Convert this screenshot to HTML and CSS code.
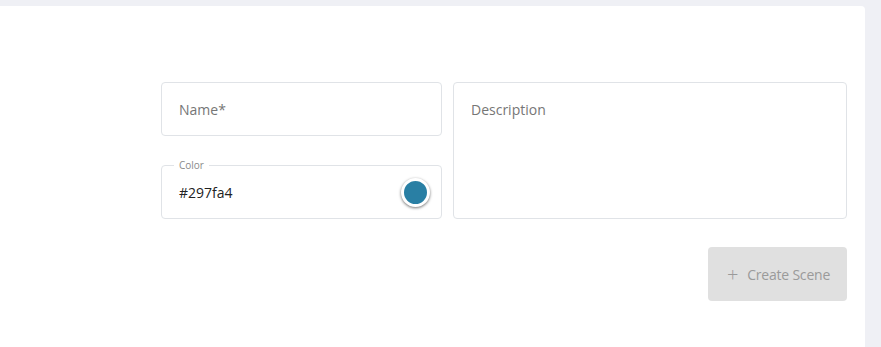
FILE: index.html
```html
<!DOCTYPE html>
<html>
<head>
  <title>Create Scene</title>
  <link rel="stylesheet" href="styles.css">
</head>
<body>
  <div class="card">
    <div class="scene-form">
      <div class="field name-field">
        <span class="placeholder">Name*</span>
      </div>
      <div class="field desc-field">
        <span class="placeholder">Description</span>
      </div>
      <div class="field color-field">
        <span class="legend">Color</span>
        <span class="value">#297fa4</span>
        <span class="swatch"></span>
      </div>
    </div>
    <div class="actions">
      <button class="create-btn"><span class="plus">+</span>Create Scene</button>
    </div>
  </div>
</body>
</html>
```

FILE: styles.css
```css
body {
  margin: 0;
  background-color: #eff0f5;
  font-family: "Open Sans", Arial, sans-serif;
  font-size: 14px;
  height: 347px;
  overflow: hidden;
}

.card {
  background-color: #fff;
  margin: 6px 16px 0 0;
  border-radius: 0 4px 0 0;
  height: 341px;
  padding: 76px 18px 0 161px;
  box-sizing: border-box;
}

.scene-form {
  display: grid;
  grid-template-columns: 281px 1fr;
  grid-template-rows: 54px 54px;
  column-gap: 11px;
  row-gap: 29px;
}

.field {
  position: relative;
  border: 1px solid #e0e3e7;
  border-radius: 4px;
  display: flex;
  align-items: center;
  padding: 0 17px;
}

.desc-field {
  grid-column: 2;
  grid-row: 1 / span 2;
  align-items: flex-start;
  padding-top: 17px;
}

.name-field {
  grid-column: 1;
  grid-row: 1;
}

.color-field {
  grid-column: 1;
  grid-row: 2;
  justify-content: space-between;
  padding-right: 11px;
}

.placeholder {
  color: #767676;
}

.value {
  color: #222;
  padding-top: 1px;
}

.legend {
  position: absolute;
  top: -7px;
  left: 12px;
  padding: 0 5px;
  background: #fff;
  font-size: 10px;
  line-height: 12px;
  color: #8a8a8a;
}

.swatch {
  width: 23px;
  height: 23px;
  border-radius: 50%;
  background-color: #297fa4;
  border: 3px solid #fff;
  box-shadow: 0 1px 3px rgba(0, 0, 0, 0.55);
}

.actions {
  display: flex;
  justify-content: flex-end;
  margin-top: 28px;
}

.create-btn {
  width: 139px;
  height: 54px;
  border: none;
  border-radius: 4px;
  background-color: #e0e0e0;
  color: #9a9a9a;
  font-family: "Open Sans", Arial, sans-serif;
  font-size: 14px;
  letter-spacing: -0.2px;
  padding: 0 0 0 2px;
}

.plus {
  font-size: 20px;
  font-weight: 300;
  margin-right: 9px;
  vertical-align: -2px;
}
```
